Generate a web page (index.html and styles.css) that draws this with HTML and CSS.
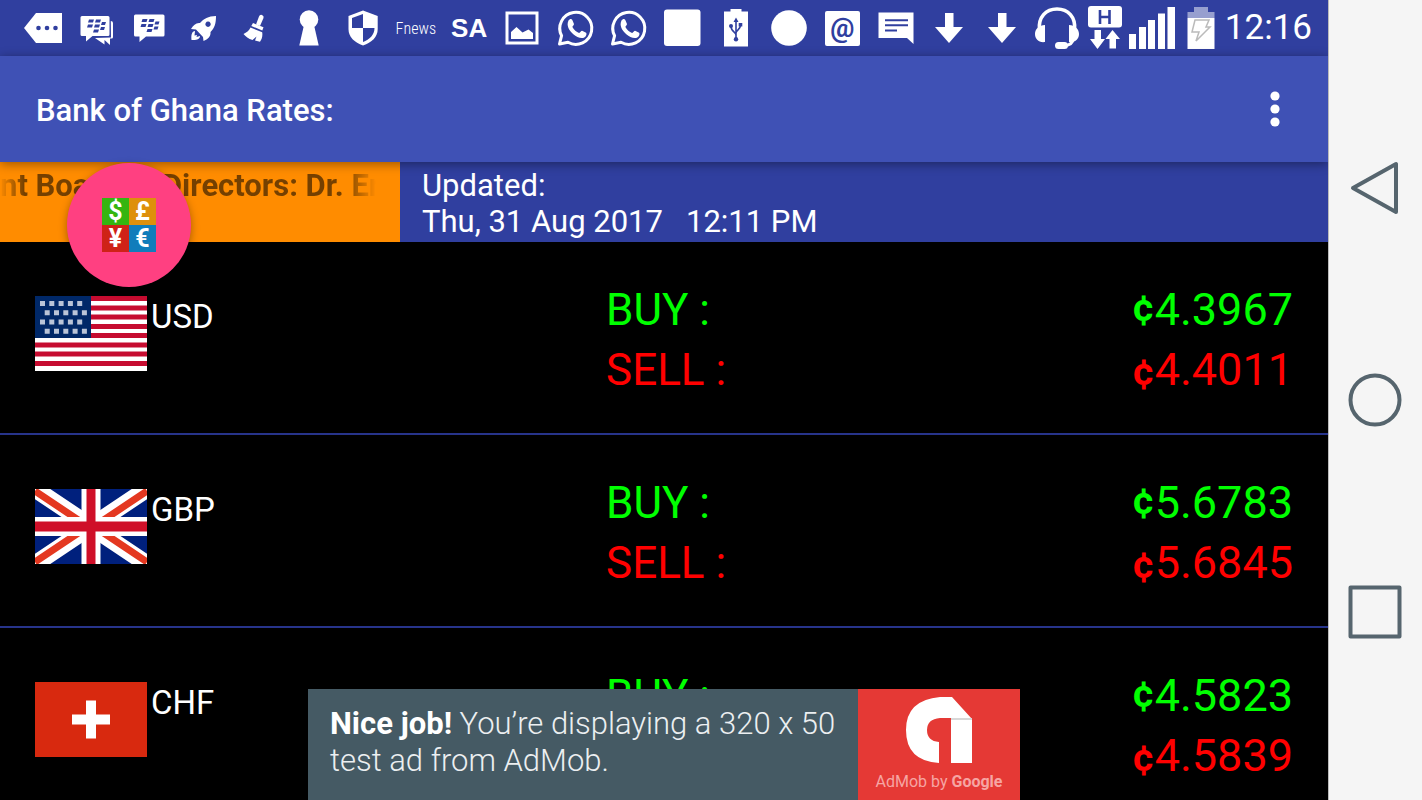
FILE: index.html
```html
<!DOCTYPE html>
<html lang="en">
<head>
<meta charset="utf-8">
<meta name="viewport" content="width=device-width, initial-scale=1">
<title>Bank of Ghana Rates</title>
<link rel="stylesheet" href="styles.css">
</head>
<body>
<svg class="defs" aria-hidden="true">
  <defs>
    <g id="bbm-dots">
      <path d="M1 0h5l-1 3H0zM8 0h5l-1 3H7zM0 5h5l-1 3H-1zM7 5h5l-1 3H6zM14 2.500h4l-1 3h-4zM13 7.500h4l-1 3h-4zM6 10h5l-1 3H5z"/>
    </g>
    <g id="whatsapp">
      <path d="M3.500 36l2.100-8.300A16 16 0 1 1 12 34.300z" fill="none" stroke="#fff" stroke-width="3" stroke-linejoin="round"/>
      <path d="M12.500 12.500c1.500-2 3-2 3.800-.5l1.600 3.700c.5 1.300-1.500 2.500-1.500 3.200 1.500 3 4 5 6.700 6 1.100 0 2-2.300 3-2.200l4 2c1 .9.200 3.600-1.800 4.700-3 1.600-7.500-.2-11-3.200-4-3.500-7.300-8.700-4.800-13.700z" fill="#fff"/>
    </g>
    <path id="arrow-down" d="M16 5h8.500v14H34L20 35 6 19h10z" fill="#fff"/>
  </defs>
</svg>
<div class="device">
  <div class="screen">
    <header class="status">
      <div class="notices">
        <span><svg viewBox="0 0 40 40"><path fill="#fff" d="M1 20L13 5h26v30H13z"/><g fill="#303f9f"><circle cx="15.500" cy="20" r="2.300"/><circle cx="24" cy="20" r="2.300"/><circle cx="32.500" cy="20" r="2.300"/></g></svg></span>
        <span><svg viewBox="0 0 40 40"><path fill="#fff" d="M6 8h26q1.500 0 1.500 1.500v17q0 1.500-1.500 1.500H16.500L10 33.500V28H6q-1.500 0-1.500-1.500v-17Q4.500 8 6 8z"/><path fill="#fff" d="M34.800 13q2.200 0 2.200 2v14q0 1.500-1.500 1.500H34V37l-5.500-5v4.500L19 30l16-.5z"/><use href="#bbm-dots" x="12" y="11.500" fill="#303f9f"/></svg></span>
        <span><svg viewBox="0 0 40 40"><path fill="#fff" d="M6.500 6.500h27.500q1.500 0 1.500 1.500v19q0 1.500-1.500 1.500H17L10.500 34v-5.500h-4Q5 28.500 5 27V8q0-1.500 1.500-1.500z"/><use href="#bbm-dots" x="12.500" y="11" fill="#303f9f"/></svg></span>
        <span><svg viewBox="0 0 40 40"><path fill="#fff" fill-rule="evenodd" d="M33 8c-8 .3-12 2.500-16 7-4-.5-6.500 2-9 6l5 .5 7 7.500.5 4c4.500-2 7.500-4.500 7-9 4-4 5.500-8 5.500-16zm-8 5.500a2.700 2.700 0 1 0 .1 0zM12 23c-3 .5-4 3.500-3.500 9 5 .5 8.500-.8 8.500-4l-3.500 1 .5-2-2.500.5z"/></svg></span>
        <span><svg viewBox="0 0 40 40"><g fill="#fff"><path d="M23 8.500q.8-2.200 3-1.500 2.200.8 1.500 3l-3.500 8-4-1.600z"/><path d="M17 15l10.500 4.300-1.200 3.200-11-4.500zM14.500 19.500l11.700 4.700c.7 4.300-.7 7.300-2.200 9.600l-5-1.200 1.500-4-4 3.400C12.500 31 9.500 28.500 7.500 26c3-1.500 5.500-3 7-6.500z"/></g></svg></span>
        <span><svg viewBox="0 0 40 40"><circle cx="20" cy="11.500" r="9.300" fill="#fff"/><path fill="#fff" d="M15 17h10l4.700 20.500H10.300z"/></svg></span>
        <span><svg viewBox="0 0 40 40"><path fill="#fff" d="M20 2.500L34.700 8v13c0 8-6 13.500-14.700 16.500C11.500 34.500 5.500 29 5.500 21V8z"/><path fill="#303f9f" d="M20 6v14H9V10zM20 20h11.500c0 7-5 11.500-11.500 14z"/></svg></span>
        <span class="fnews">Fnews</span>
        <span class="sa">SA</span>
        <span><svg viewBox="0 0 40 40"><path fill="none" stroke="#fff" stroke-width="3" d="M5 5h30v30H5z"/><path fill="#fff" d="M9 31v-7l5.500-5 6 5.500 6-3L31 25v6z"/></svg></span>
        <span><svg viewBox="0 0 40 40"><use href="#whatsapp"/></svg></span>
        <span><svg viewBox="0 0 40 40"><use href="#whatsapp"/></svg></span>
        <span><svg viewBox="0 0 40 40"><rect x="2" y="1.500" width="36.500" height="36.500" rx="3" fill="#fff"/></svg></span>
        <span><svg viewBox="0 0 40 40"><path fill="#fff" d="M14.500 1h11v2.500H32v35H8v-35h6.500z"/><g fill="none" stroke="#303f9f" stroke-width="1.600"><path d="M20 31V12M20 27c0-3-5-3-5-9M20 25c0-3 4.500-3 4.500-8"/></g><g fill="#303f9f"><path d="M17.500 14L20 9.500l2.500 4.500zM22.700 15h3.600v3.600h-3.600z"/><circle cx="15" cy="18" r="2"/><circle cx="20" cy="31.300" r="2.200"/></g></svg></span>
        <span><svg viewBox="0 0 40 40"><circle cx="20" cy="20" r="17.800" fill="#fff"/></svg></span>
        <span class="at"><b>@</b></span>
        <span><svg viewBox="0 0 40 40"><path fill="#fff" d="M2.500 4.500h35v31.500L31 30H2.500z"/><path stroke="#303f9f" stroke-width="2" d="M9 12.200h23M9 17.300h23M9 22.500h12"/></svg></span>
        <span><svg viewBox="0 0 40 40"><use href="#arrow-down"/></svg></span>
        <span><svg viewBox="0 0 40 40"><use href="#arrow-down"/></svg></span>
      </div>
      <div class="system">
        <svg class="headset" viewBox="0 0 46 44"><path d="M5.500 24C4 11 12 3 23 3s19 8 17.500 21" fill="none" stroke="#fff" stroke-width="3.600"/><path fill="#fff" d="M11 19v17C5 37 1 33 1 28s4-9 10-9zM35 19v17c6 1 10-3 10-8s-4-9-10-9z"/><path d="M39 33c0 5-4 6.500-10 7" fill="none" stroke="#fff" stroke-width="3"/><rect x="21" y="36" width="13" height="7" rx="3.500" fill="#fff"/></svg>
        <svg class="data" viewBox="0 0 34 44"><rect width="34" height="21.500" rx="3" fill="#fff"/><path d="M12 4v14M21.500 4v14M12 11h9.500" stroke="#303f9f" stroke-width="2.600"/><path fill="#fff" d="M6.500 24H13v9h4L9.500 43 2 33h4.500zM24.500 24L32 33h-4v9.500h-6.500V33h-4z"/></svg>
        <svg class="signal" viewBox="0 0 46 44"><path fill="#fff" d="M0 28h7v15H0zM10 21h7v22h-7zM19 14h7v29h-7zM29 7.500h7V43h-7zM38.500 1h7.500v42h-7.500z"/></svg>
        <svg class="battery" viewBox="0 0 28 44"><path fill="#979fcf" d="M7 1h14v5h6.500v6H.5V6H7z"/><path fill="#fff" d="M.5 12h27v31H.5z"/><path d="M8 14h14l-3 7h4L9 35l3-9H5z" fill="none" stroke="#bbb" stroke-width="1.500"/></svg>
        <time>12:16</time>
      </div>
    </header>
    <div class="appbar">
      <h1>Bank of Ghana Rates:</h1>
      <button type="button" class="more" aria-label="More options"><svg viewBox="0 0 12 40"><g fill="#fff"><circle cx="6" cy="7" r="4.600"/><circle cx="6" cy="20" r="4.600"/><circle cx="6" cy="33" r="4.600"/></g></svg></button>
    </div>
    <main>
      <div class="info">
        <div class="ticker"><p>nt Board of Directors: Dr. Er</p></div>
        <p class="updated">Updated:<br>Thu, 31 Aug 2017 &nbsp; 12:11 PM</p>
        <button type="button" class="fab" aria-label="Convert currency">
          <span class="coin green">$</span><span class="coin gold">£</span><span class="coin red">¥</span><span class="coin blue">€</span>
        </button>
      </div>
      <ul class="rates">
        <li>
          <div class="currency">
            <svg viewBox="0 0 112 75"><path fill="#fff" d="M0 0h112v75H0z"/><path stroke="#c60c30" stroke-width="5" d="M0 2.500h112M0 12h112M0 21h112M0 30.500h112M0 39.500h112M0 49h112M0 58h112M0 67.500h112"/><path fill="#002868" d="M0 0h56v42H0z"/><path stroke="#b9c4d8" stroke-width="5" stroke-dasharray="5 4.300" d="M5 7.500h43M9.700 16.700h43M5 26h43M9.700 35.200h43"/></svg>
            <span>USD</span>
          </div>
          <div class="kinds"><span class="buy">BUY :</span><span class="sell">SELL :</span></div>
          <div class="values"><span class="buy"><b>¢</b>4.3967</span><span class="sell"><b>¢</b>4.4011</span></div>
        </li>
        <li>
          <div class="currency">
            <svg viewBox="0 0 112 75"><path fill="#00207d" d="M0 0h112v75H0z"/><path stroke="#fff" stroke-width="17" d="M0 0l112 75M112 0L0 75"/><path stroke="#e43820" stroke-width="7" d="M0 2l56 37.500M112 2L56 39.500M0 73l56-37.500M112 73L56 35.500"/><path fill="#fff" d="M46.500 0h19v75h-19zM0 28h112v19H0z"/><path fill="#cf0f28" d="M51.500 0h9v75h-9zM0 32.500h112v10H0z"/></svg>
            <span>GBP</span>
          </div>
          <div class="kinds"><span class="buy">BUY :</span><span class="sell">SELL :</span></div>
          <div class="values"><span class="buy"><b>¢</b>5.6783</span><span class="sell"><b>¢</b>5.6845</span></div>
        </li>
        <li>
          <div class="currency">
            <svg viewBox="0 0 112 75"><path fill="#d8290f" d="M0 0h112v75H0z"/><path fill="#fff" d="M51 18.500h10v14h14v10H61v14H51v-14H37v-10h14z"/></svg>
            <span>CHF</span>
          </div>
          <div class="kinds"><span class="buy">BUY :</span><span class="sell">SELL :</span></div>
          <div class="values"><span class="buy"><b>¢</b>4.5823</span><span class="sell"><b>¢</b>4.5839</span></div>
        </li>
      </ul>
    </main>
    <aside class="ad">
      <p><strong>Nice job!</strong> You’re displaying a 320 x 50 test ad from AdMob.</p>
      <div class="brand">
        <svg viewBox="0 0 68 68"><path fill="#fff" d="M35 0h12l20 22v44H46V21H35q-13 1-13 12 0 11 12 12v21Q1 64 1 33 1 3 35 0z"/><path fill="#d8d8d8" d="M46 21h21v2H46z"/></svg>
        <span>AdMob by <b>Google</b></span>
      </div>
    </aside>
  </div>
  <nav class="keys">
    <button type="button" aria-label="Back"><svg viewBox="0 0 54 54"><path d="M5 27L48 3v48z"/></svg></button>
    <button type="button" aria-label="Home"><svg viewBox="0 0 54 54"><circle cx="27" cy="27" r="24.500"/></svg></button>
    <button type="button" aria-label="Recent apps"><svg viewBox="0 0 54 54"><path d="M2.500 2.500h49v49h-49z"/></svg></button>
  </nav>
</div>
</body>
</html>
```
FILE: styles.css
```css
* {
  box-sizing: border-box;
}

body {
  margin: 0;
  background: #000;
  font-family: Roboto, "Liberation Sans", sans-serif;
  color: #fff;
}

h1, p, ul {
  margin: 0;
  padding: 0;
}

button {
  padding: 0;
  border: 0;
  background: none;
  cursor: pointer;
}

svg {
  display: block;
}

.defs {
  position: absolute;
  width: 0;
  height: 0;
}

.device {
  display: flex;
  height: 100vh;
  overflow: hidden;
}

.screen {
  position: relative;
  flex: 1;
  min-width: 0;
  overflow: hidden;
}

/* Status bar */
.status {
  display: flex;
  height: 56px;
  padding: 0 16px;
  background: #303f9f;
}

.notices {
  display: flex;
  flex: 1;
}

.notices > span {
  flex: 1 1 0;
  min-width: 0;
  display: flex;
  align-items: center;
  justify-content: center;
}

.notices svg {
  width: 40px;
  height: 40px;
}

.notices .fnews {
  font: 300 16px "Roboto Condensed", "Liberation Sans Narrow", Roboto, sans-serif;
}

.notices .sa {
  font: bold 26px "Liberation Sans", sans-serif;
}

.at b {
  width: 35px;
  height: 35px;
  border-radius: 2px;
  background: #fff;
  color: #303f9f;
  font: bold 27px/34px Roboto, sans-serif;
  text-align: center;
}

.system {
  display: flex;
  align-items: center;
  padding-left: 5px;
}

.headset {
  width: 46px;
  height: 44px;
  margin-right: 8px;
}

.data {
  width: 34px;
  height: 44px;
  margin-right: 7px;
}

.signal {
  width: 46px;
  height: 44px;
  margin-right: 12px;
}

.battery {
  width: 28px;
  height: 44px;
  margin-right: 10px;
}

.status time {
  font-size: 35px;
  line-height: 60px;
}

/* App bar */
.appbar {
  position: relative;
  z-index: 1;
  display: flex;
  align-items: center;
  justify-content: space-between;
  height: 106px;
  padding: 0 33px 0 36px;
  background: #3f51b5;
  box-shadow: 0 2px 10px rgba(0, 0, 0, 0.4);
}

.appbar h1 {
  padding-top: 2px;
  font-size: 31px;
  font-weight: 500;
}

.more {
  width: 40px;
  height: 48px;
}

.more svg {
  width: 12px;
  height: 40px;
  margin: 0 auto;
}

/* Ticker and time of the last update */
.info {
  position: relative;
  display: grid;
  grid-template-columns: 400px 1fr;
  background: #303f9f;
  font-size: 31px;
  line-height: 36px;
}

.ticker {
  padding: 6px 24px 0 0;
  background: #ff8c00;
}

.ticker p {
  overflow: hidden;
  color: rgba(0, 0, 0, 0.54);
  font-weight: 700;
  white-space: nowrap;
  mask-image: linear-gradient(to right, transparent, #000 24px, #000 calc(100% - 32px), transparent);
}

.updated {
  padding: 6px 22px 2px;
}

.fab {
  position: absolute;
  z-index: 2;
  top: 1px;
  left: 67px;
  display: grid;
  grid-template-columns: 27px 27px;
  grid-auto-rows: 27px;
  place-content: center;
  width: 124px;
  height: 124px;
  border-radius: 50%;
  background: #ff4081;
  box-shadow: 0 3px 8px rgba(0, 0, 0, 0.35);
}

.coin {
  color: #fff;
  font: bold 25px/27px Roboto, sans-serif;
}

.green { background: #35b510; }
.gold { background: #de900c; }
.red { background: #cf2217; }
.blue { background: #107dbb; }

/* Rates */
.rates {
  list-style: none;
}

.rates li {
  display: grid;
  grid-template-columns: 571px 1fr auto;
  padding: 38px 35px 33px;
  border-bottom: 2px solid #27348b;
  font-size: 45px;
  line-height: 60px;
}

.currency {
  display: flex;
  gap: 4px;
  padding-top: 16px;
  font-size: 33px;
  line-height: 42px;
}

.currency svg {
  width: 112px;
  height: 75px;
}

.kinds,
.values {
  display: grid;
}

.kinds {
  font-size: 44px;
}

.values b {
  font-size: 39px;
  line-height: 36px;
}

.values .buy b {
  vertical-align: 4px;
}

.buy { color: #0f0; }
.sell { color: #f00; }

/* Advertisement */
.ad {
  position: absolute;
  z-index: 3;
  bottom: 0;
  left: 50%;
  display: flex;
  width: 712px;
  height: 111px;
  margin-left: -356px;
  background: #455a64;
}

.ad p {
  flex: 1;
  padding: 16px 0 0 22px;
  color: #eceff1;
  font-size: 31px;
  font-weight: 300;
  line-height: 37px;
}

.ad strong {
  color: #fff;
  font-weight: 700;
}

.brand {
  display: flex;
  flex-direction: column;
  align-items: center;
  width: 162px;
  padding-top: 8px;
  background: #e53935;
  color: #f6a5a3;
  font-size: 16px;
  line-height: 34px;
}

.brand svg {
  width: 68px;
  height: 68px;
}

/* Navigation keys */
.keys {
  display: flex;
  flex-direction: column;
  align-items: center;
  justify-content: center;
  gap: 158px;
  width: 94px;
  padding-right: 1px;
  border-left: 1px solid #bbb;
  background: #f5f5f5;
}

.keys svg {
  width: 54px;
  height: 54px;
  fill: none;
  stroke: #56656e;
  stroke-width: 4px;
  stroke-linejoin: round;
}
```
